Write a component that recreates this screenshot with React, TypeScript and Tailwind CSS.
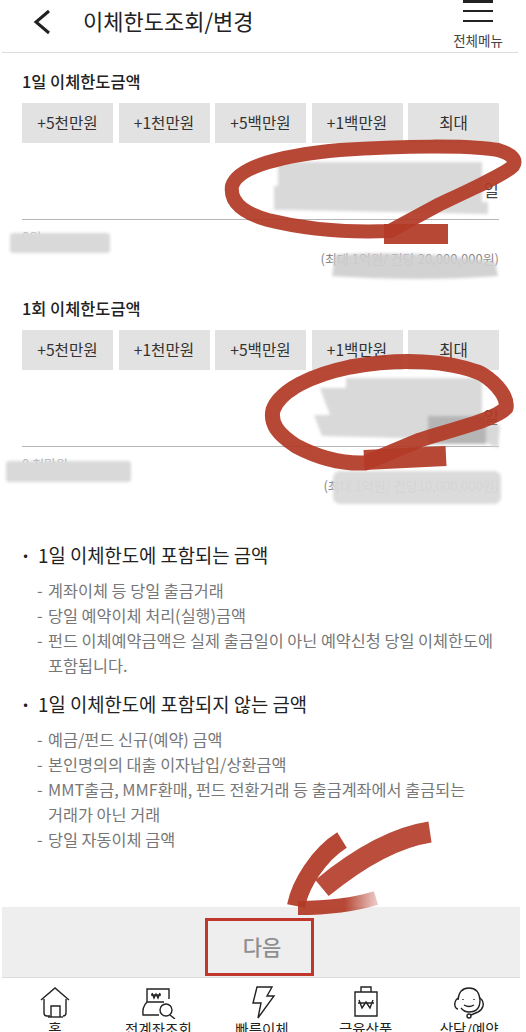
const QUICK_AMOUNTS = ["+5천만원", "+1천만원", "+5백만원", "+1백만원", "최대"];

const LimitSection = ({
  title,
  className,
  inputSuffix,
  current,
  maxText,
}: {
  title: string;
  className: string;
  inputSuffix: string;
  current: string;
  maxText: string;
}) => (
  <section className={`px-[22px] ${className}`}>
    <h2 className="text-[16.4px] leading-[24px] font-medium text-[#222]">{title}</h2>
    <div className="mt-[10px] flex h-[40px] w-[477px] justify-between">
      {QUICK_AMOUNTS.map((label) => (
        <button
          key={label}
          type="button"
          className="flex w-[91px] items-center justify-center bg-[#e2e2e2] text-[15.6px] text-[#333]"
        >
          {label}
        </button>
      ))}
    </div>
    <div className="flex h-[77px] w-[477px] items-end justify-end border-b border-[#b5b5b5] pb-[17px] text-[17px] leading-[24px] text-[#444]">
      {inputSuffix}
    </div>
    <p className="mt-[9px] h-[16px] text-[13px] leading-[16px] text-[#aaa]">{current}</p>
    <p className="mt-[5px] w-[477px] text-right text-[13px] leading-[18px] text-[#888]">{maxText}</p>
  </section>
);

const InfoList = ({ title, items, className }: { title: string; items: string[]; className: string }) => (
  <section className={`pl-[20px] ${className}`}>
    <h3 className="flex text-[18.8px] leading-[26px] text-[#222]">
      <span className="w-[18px] font-bold">·</span>
      {title}
    </h3>
    <ul className="mt-[10px] text-[16.3px] leading-[25px] text-[#777]">
      {items.map((item) => (
        <li key={item} className="flex pl-[17px]">
          <span className="w-[11px] shrink-0">-</span>
          <span className="w-[470px] whitespace-pre-line">{item}</span>
        </li>
      ))}
    </ul>
  </section>
);

const NAV_ICON = "h-[34px] w-[36px] fill-none stroke-[#222] stroke-[1.4]";

const NAV_ITEMS = [
  {
    label: "홈",
    icon: (
      <svg viewBox="0 0 36 34" className={NAV_ICON}>
        <path d="M4 15 L18 3 L32 15" />
        <path d="M7 14 V28 Q7 31 10 31 H13 M29 14 V28 Q29 31 26 31" />
        <path d="M14 32 V21 H23 V32" />
        <path d="M11 32 H26" />
      </svg>
    ),
  },
  {
    label: "전계좌조회",
    icon: (
      <svg viewBox="0 0 36 34" className={NAV_ICON}>
        <path d="M24 17 H7 V4 H29 V14" />
        <path d="M7 17 Q2 22 3 30 H19" />
        <path d="M12 8 L14 13 L16 9 L18 13 L20 8 M11 10 H21" />
        <circle cx="26" cy="25" r="6" />
        <path d="M30 30 L35 34" />
      </svg>
    ),
  },
  {
    label: "빠른이체",
    icon: (
      <svg viewBox="0 0 36 34" className={NAV_ICON}>
        <path d="M13 2 H28 L23 11 H30 L14 33 L17 18 H9 Z" />
      </svg>
    ),
  },
  {
    label: "금융상품",
    icon: (
      <svg viewBox="0 0 36 34" className={NAV_ICON}>
        <path d="M7 7 H29 V31 H7 Z" />
        <path d="M13 7 V2 H23 V7" />
        <path d="M11 15 L14 23 L18 17 L22 23 L25 15 M10 18 H26" />
      </svg>
    ),
  },
  {
    label: "상담/예약",
    icon: (
      <svg viewBox="0 0 36 34" className={NAV_ICON}>
        <path d="M7 15 Q8 3 18 3 Q28 3 29 15 Q29 27 18 27 Q13 27 10 23" />
        <path d="M7 13 Q3 16 4 21 Q5 24 7 24 M29 13 Q33 16 32 21 Q31 25 27 27 L20 30" />
        <circle cx="18" cy="31" r="2" />
        <path d="M12 14 V15 M23 14 V15 M13 20 Q18 23 23 20" />
      </svg>
    ),
  },
];

export default function App() {
  return (
    <div className="relative h-[1032px] w-[526px] overflow-hidden bg-white font-['Noto_Sans_CJK_KR','Noto_Sans',sans-serif]">
      <header className="mx-[2px] flex h-[53px] w-[516px] items-start border-b border-[#dcdcdc]">
        <svg viewBox="0 0 20 28" className="mt-[8px] ml-[29px] h-[28px] w-[20px] fill-none stroke-[#222] stroke-[3]">
          <path d="M18 3 L5 14 L18 25" />
        </svg>
        <h1 className="mt-[2px] ml-[32px] text-[22px] leading-[36px] text-[#222]">이체한도조회/변경</h1>
        <div className="mr-[15px] ml-auto flex w-[50px] flex-col items-center">
          <div className="flex h-[22px] w-[30px] flex-col justify-between">
            <span className="h-[2.5px] bg-[#222]" />
            <span className="h-[2.5px] bg-[#222]" />
            <span className="h-[2.5px] bg-[#222]" />
          </div>
          <span className="mt-[10px] text-[13.5px] leading-[16px] whitespace-nowrap text-[#444]">전체메뉴</span>
        </div>
      </header>

      <LimitSection
        title="1일 이체한도금액"
        className="mt-[16px]"
        inputSuffix="일"
        current="0원"
        maxText="(최대 1억원/ 건당 20,000,000원)"
      />
      <LimitSection
        title="1회 이체한도금액"
        className="mt-[28px]"
        inputSuffix="일"
        current="0 천만원"
        maxText="(최대 1억원/ 건당10,000,000원)"
      />

      <InfoList
        className="mt-[47px]"
        title="1일 이체한도에 포함되는 금액"
        items={[
          "계좌이체 등 당일 출금거래",
          "당일 예약이체 처리(실행)금액",
          "펀드 이체예약금액은 실제 출금일이 아닌 예약신청 당일 이체한도에\n포함됩니다.",
        ]}
      />
      <InfoList
        className="mt-[13px]"
        title="1일 이체한도에 포함되지 않는 금액"
        items={[
          "예금/펀드 신규(예약) 금액",
          "본인명의의 대출 이자납입/상환금액",
          "MMT출금, MMF환매, 펀드 전환거래 등 출금계좌에서 출금되는\n거래가 아닌 거래",
          "당일 자동이체 금액",
        ]}
      />

      <div className="absolute top-[907px] left-[2px] flex h-[71px] w-[518px] items-end justify-center border-b border-[#dcdcdc] bg-[#eeeeee]">
        <button
          type="button"
          className="mr-[3px] mb-[1px] flex h-[58px] w-[109px] items-center justify-center border-[3px] border-[#c0352c] pl-[5px] text-[21px] font-medium text-[#8f8f8f]"
        >
          다음
        </button>
      </div>

      <nav className="absolute top-[985px] left-[3px] grid w-[518px] grid-cols-5">
        {NAV_ITEMS.map((item) => (
          <div key={item.label} className="flex flex-col items-center">
            {item.icon}
            <span className="text-[14.5px] leading-[20px] whitespace-nowrap text-[#222]">{item.label}</span>
          </div>
        ))}
      </nav>

      {/* 개인정보 가림 + 붉은 펜 표시 */}
      <svg viewBox="0 0 526 1032" className="pointer-events-none absolute inset-0 h-[1032px] w-[526px]">
        <defs>
          <filter id="soft" x="-10%" y="-30%" width="120%" height="160%">
            <feGaussianBlur stdDeviation="1.6" />
          </filter>
          <linearGradient id="fade" x1="0" x2="1" y1="0" y2="0">
            <stop offset="0.6" stopColor="#b23a27" />
            <stop offset="1" stopColor="#b23a27" stopOpacity="0.3" />
          </linearGradient>
        </defs>
        <g filter="url(#soft)" fill="#d9d9d9">
          <path d="M278 162 H482 V202 H488 V214 L290 210 H274 V186 H278 Z" />
          <rect x="10" y="233" width="100" height="20" rx="3" />
          <path d="M335 255 Q420 250 495 262 L498 276 Q420 282 332 276 Z" fill="#cfcfcf" opacity="0.93" />
          <path d="M346 378 H482 V425 H500 L498 448 L480 440 L322 436 L314 415 H330 L320 388 H346 Z" />
          <rect x="6" y="461" width="125" height="21" rx="3" />
          <rect x="333" y="471" width="168" height="33" rx="7" opacity="0.94" />
        </g>
        <rect x="428" y="416" width="58" height="28" fill="#b5b5b5" filter="url(#soft)" />

        <g fill="none" stroke="#b33a27" strokeOpacity="0.93" strokeLinecap="round" strokeLinejoin="round">
          <path
            strokeWidth="14"
            d="M390 231 C340 233 300 228 268 220 C240 212 230 200 232 186 C238 166 285 155 340 150 C400 146 470 145 498 150 C512 154 517 160 513 166 C505 174 470 190 440 204 L390 231"
          />
          <path strokeWidth="20" d="M384 234 H448" strokeLinecap="butt" />
          <path
            strokeWidth="15"
            d="M365 463 C340 464 315 456 296 446 C278 434 270 424 273 410 C280 390 312 375 350 367 C400 358 450 360 482 374 C498 384 508 398 506 408 C495 420 450 430 420 440 L365 463"
          />
          <path strokeWidth="20" d="M364 460 L446 456" strokeLinecap="butt" />
          <path strokeWidth="21" d="M322 888 C350 865 390 838 430 832" strokeOpacity="0.9" strokeLinecap="butt" />
          <path strokeWidth="18" d="M342 840 C318 855 300 885 296 906" strokeLinecap="butt" />
          <path stroke="url(#fade)" strokeWidth="14" d="M298 908 C320 908 350 906 376 898" strokeLinecap="butt" />
        </g>
      </svg>
    </div>
  );
}
